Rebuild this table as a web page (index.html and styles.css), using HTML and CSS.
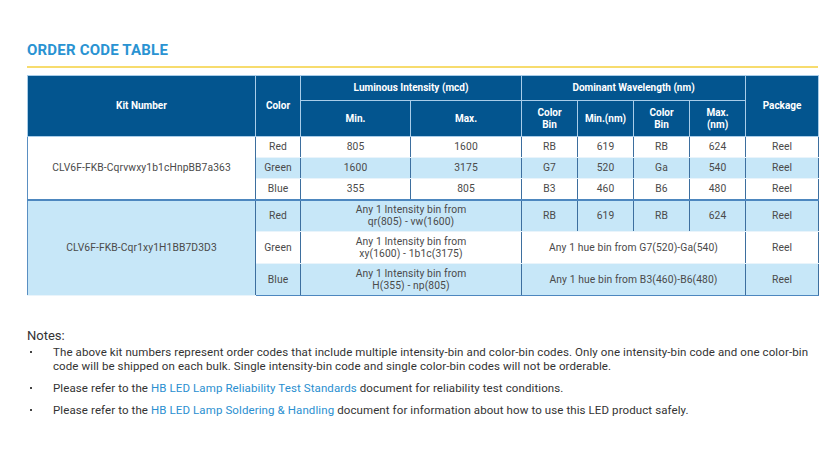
FILE: index.html
```html
<!DOCTYPE html>
<html>
<head>
<meta charset="utf-8">
<link rel="stylesheet" href="styles.css">
</head>
<body>
<div class="page">
  <h2 class="title">ORDER CODE TABLE</h2>
  <div class="rule"></div>
  <table class="codes">
    <colgroup>
      <col class="c-kit"><col class="c-color"><col class="c-int"><col class="c-int2">
      <col class="c-bin"><col class="c-bin"><col class="c-bin"><col class="c-bin"><col class="c-pkg">
    </colgroup>
    <thead>
      <tr class="h1">
        <th rowspan="2">Kit Number</th>
        <th rowspan="2">Color</th>
        <th colspan="2">Luminous Intensity (mcd)</th>
        <th colspan="4">Dominant Wavelength (nm)</th>
        <th rowspan="2">Package</th>
      </tr>
      <tr class="h2">
        <th>Min.</th>
        <th>Max.</th>
        <th>Color<br>Bin</th>
        <th>Min.(nm)</th>
        <th>Color<br>Bin</th>
        <th>Max.<br>(nm)</th>
      </tr>
    </thead>
    <tbody class="sec1">
      <tr class="w">
        <td rowspan="3" class="kit w">CLV6F-FKB-Cqrvwxy1b1cHnpBB7a363</td>
        <td>Red</td><td>805</td><td>1600</td><td>RB</td><td>619</td><td>RB</td><td>624</td><td>Reel</td>
      </tr>
      <tr class="b">
        <td>Green</td><td>1600</td><td>3175</td><td>G7</td><td>520</td><td>Ga</td><td>540</td><td>Reel</td>
      </tr>
      <tr class="w">
        <td>Blue</td><td>355</td><td>805</td><td>B3</td><td>460</td><td>B6</td><td>480</td><td>Reel</td>
      </tr>
    </tbody>
    <tbody class="sec2">
      <tr class="b tall first">
        <td rowspan="3" class="kit b">CLV6F-FKB-Cqr1xy1H1BB7D3D3</td>
        <td>Red</td><td colspan="2">Any 1 Intensity bin from<br>qr(805) - vw(1600)</td><td>RB</td><td>619</td><td>RB</td><td>624</td><td>Reel</td>
      </tr>
      <tr class="w tall">
        <td>Green</td><td colspan="2">Any 1 Intensity bin from<br>xy(1600) - 1b1c(3175)</td><td colspan="4">Any 1 hue bin from G7(520)-Ga(540)</td><td>Reel</td>
      </tr>
      <tr class="b tall">
        <td>Blue</td><td colspan="2">Any 1 Intensity bin from<br>H(355) - np(805)</td><td colspan="4">Any 1 hue bin from B3(460)-B6(480)</td><td>Reel</td>
      </tr>
    </tbody>
  </table>

  <div class="notes">
    <p class="notes-title">Notes:</p>
    <ul class="note-list">
      <li>The above kit numbers represent order codes that include multiple intensity-bin and color-bin codes. Only one intensity-bin code and one color-bin code will be shipped on each bulk. Single intensity-bin code and single color-bin codes will not be orderable.</li>
      <li>Please refer to the <span class="link">HB LED Lamp Reliability Test Standards</span> document for reliability test conditions.</li>
      <li>Please refer to the <span class="link">HB LED Lamp Soldering &amp; Handling</span> document for information about how to use this LED product safely.</li>
    </ul>
  </div>
</div>
</body>
</html>
```

FILE: styles.css
```css
* { box-sizing: border-box; }
html, body { margin: 0; padding: 0; background: #ffffff; }
body { font-family: Roboto, "Liberation Sans", sans-serif; color: #444; }

.page { padding: 41px 18px 0 27px; width: 836px; }

.title {
  margin: 0;
  font-size: 15px;
  line-height: 18px;
  font-weight: 700;
  color: #2a93d2;
  letter-spacing: 0.2px;
}
.rule {
  margin-top: 7px;
  height: 2px;
  width: 791px;
  background: #f7dc6e;
}

.codes {
  margin-top: 7px;
  width: 791px;
  border-collapse: collapse;
  table-layout: fixed;
  font-size: 10px;
  border: 1px solid #5a8fc2;
}
.c-kit { width: 228px; }
.c-color { width: 45px; }
.c-int { width: 110px; }
.c-int2 { width: 111px; }
.c-bin { width: 56px; }
.c-pkg { width: 73px; }

.codes th {
  background: #03558f;
  color: #ffffff;
  font-weight: 700;
  font-size: 10px;
  line-height: 12px;
  border: 1px solid #a9cde9;
  text-align: center;
  padding: 0;
}
.codes tr.h1 th { height: 25px; }
.codes tr.h2 th { height: 36px; }
.codes tr.h1 th[rowspan] { height: 61px; }

.codes td {
  text-align: center;
  padding: 0;
  font-size: 10.3px;
  letter-spacing: 0.1px;
  line-height: 12px;
  color: #4a4a4a;
  border-left: 1px solid #3d6f9f;
  border-right: 1px solid #3d6f9f;
  border-top: 1px solid #e9f4fb;
  border-bottom: 1px solid #e9f4fb;
  height: 21px;
}
.codes tr.tall td { height: 32px; }
.codes tr.w td { background: #ffffff; }
.codes tr.b td { background: #c7e7f8; }
.codes td.kit.w { background: #ffffff; }
.codes td.kit.b { background: #c7e7f8; }
.codes td.kit { border-left: 1px solid #5a8fc2; }

.codes tbody.sec2 tr.first td { border-top: 2px solid #4d87bf; }
.codes tbody.sec2 tr:last-child td { border-bottom: 1px solid #4d87bf; }

.notes { margin-top: 32px; }
.notes-title {
  margin: 0;
  font-size: 13px;
  line-height: 15px;
  color: #333;
}
.note-list {
  list-style: none;
  margin: 2px 0 0 0;
  padding: 0;
  width: 791px;
}
.note-list li {
  position: relative;
  padding-left: 26px;
  font-size: 11.5px;
  letter-spacing: 0.1px;
  line-height: 14px;
  color: #333;
  margin-bottom: 8px;
}
.note-list li::before {
  content: "";
  position: absolute;
  left: 3px;
  top: 6px;
  width: 2px;
  height: 2px;
  background: #444;
}
.link { color: #2a8fd0; }
```
